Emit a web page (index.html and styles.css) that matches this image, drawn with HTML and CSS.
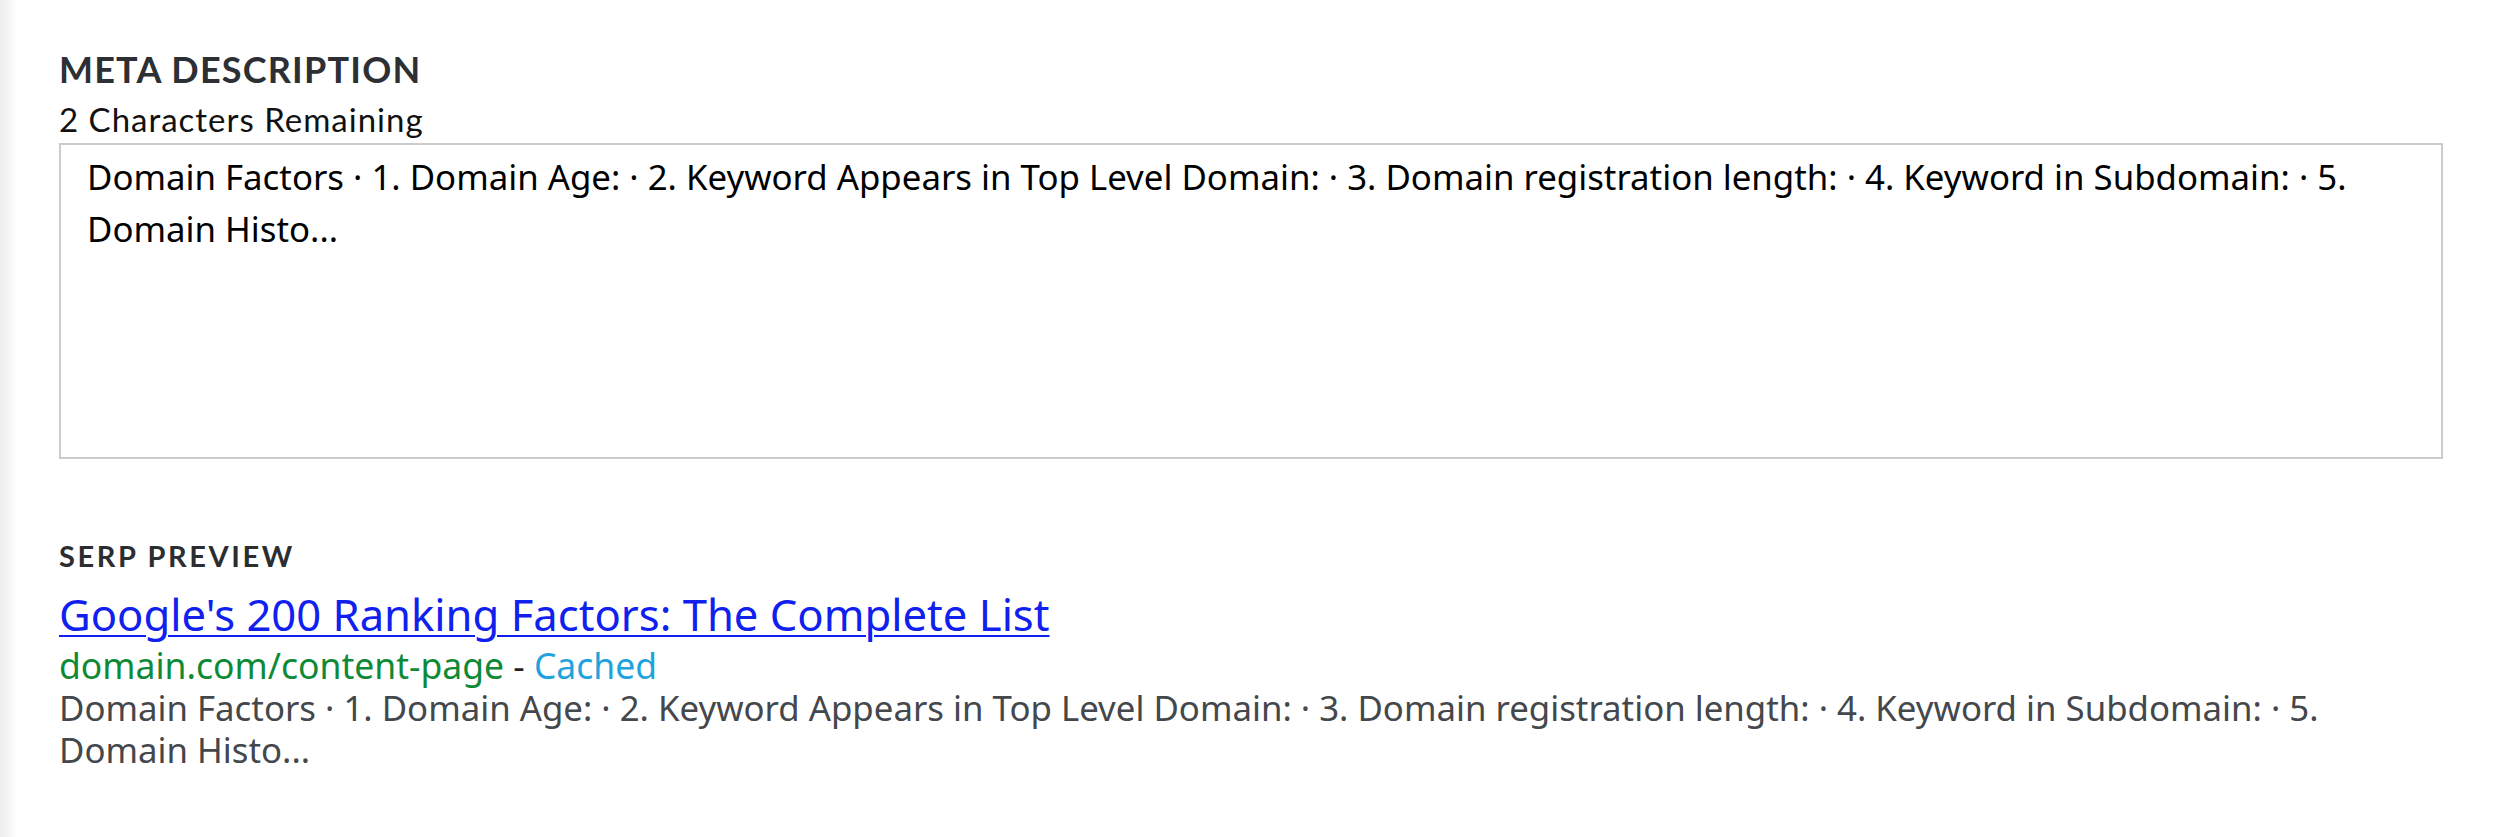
FILE: index.html
```html
<!DOCTYPE html>
<html lang="en">
<head>
<meta charset="utf-8">
<title>Meta Description</title>
<link rel="stylesheet" href="styles.css">
</head>
<body>
<div class="page">
  <section class="meta">
    <h2 class="heading">META DESCRIPTION</h2>
    <div class="remaining">2 Characters Remaining</div>
    <textarea class="meta-input" readonly>Domain Factors · 1. Domain Age: · 2. Keyword Appears in Top Level Domain: · 3. Domain registration length: · 4. Keyword in Subdomain: · 5. Domain Histo...</textarea>
  </section>
  <section class="serp">
    <h3 class="serp-heading">SERP PREVIEW</h3>
    <a class="serp-title" href="#">Google's 200 Ranking Factors: The Complete List</a>
    <div class="serp-url"><span class="url">domain.com/content-page</span> <span class="dash">-</span> <span class="cached">Cached</span></div>
    <div class="serp-desc">Domain Factors · 1. Domain Age: · 2. Keyword Appears in Top Level Domain: · 3. Domain registration length: · 4. Keyword in Subdomain: · 5. Domain Histo...</div>
  </section>
</div>
</body>
</html>
```
FILE: styles.css
```css
html, body {
  margin: 0;
  padding: 0;
}
body {
  width: 2500px;
  height: 837px;
  background: linear-gradient(to right, #eeeeee 0px, #f4f4f4 8px, #fbfbfb 13px, #ffffff 17px);
  font-family: "Noto Sans", "Open Sans", sans-serif;
  overflow: hidden;
}
.page {
  padding: 49px 57px 0 59px;
  display: flex;
  flex-direction: column;
}
.meta {
  display: flex;
  flex-direction: column;
}
.heading {
  margin: 0;
  font-family: Lato, "Noto Sans", sans-serif;
  font-weight: 700;
  font-size: 36px;
  line-height: 40px;
  letter-spacing: 1.2px;
  color: #2c3034;
}
.remaining {
  margin-top: 13px;
  font-family: Lato, "Noto Sans", sans-serif;
  font-size: 33px;
  line-height: 34px;
  letter-spacing: 1px;
  color: #111;
}
.meta-input {
  margin: 7px 0 0 0;
  box-sizing: border-box;
  width: 100%;
  height: 316px;
  border: 2px solid #cccccc;
  border-radius: 0;
  padding: 6px 26px 0 26px;
  font-family: "Noto Sans", "Open Sans", sans-serif;
  font-size: 34.8px;
  line-height: 52px;
  color: #000;
  background: #fff;
  resize: none;
  outline: none;
  overflow: hidden;
}
.serp {
  margin-top: 81px;
  display: flex;
  flex-direction: column;
  align-items: flex-start;
}
.serp-heading {
  margin: 0;
  font-family: Lato, "Noto Sans", sans-serif;
  font-weight: 700;
  font-size: 29px;
  line-height: 32px;
  letter-spacing: 2.6px;
  color: #2b2d30;
}
.serp-title {
  margin-top: 18px;
  font-size: 43.6px;
  line-height: 48px;
  color: #1020ee;
  text-decoration: underline;
  text-underline-offset: 4px;
  text-decoration-thickness: 2px;
}
.serp-url {
  margin-top: 6px;
  font-size: 35.5px;
  line-height: 42px;
}
.url {
  color: #0e8a37;
}
.dash {
  color: #222;
}
.cached {
  color: #1fa3dc;
}
.serp-desc {
  margin-top: 1px;
  max-width: 2360px;
  font-size: 34.8px;
  line-height: 42px;
  color: #44474b;
}
```
